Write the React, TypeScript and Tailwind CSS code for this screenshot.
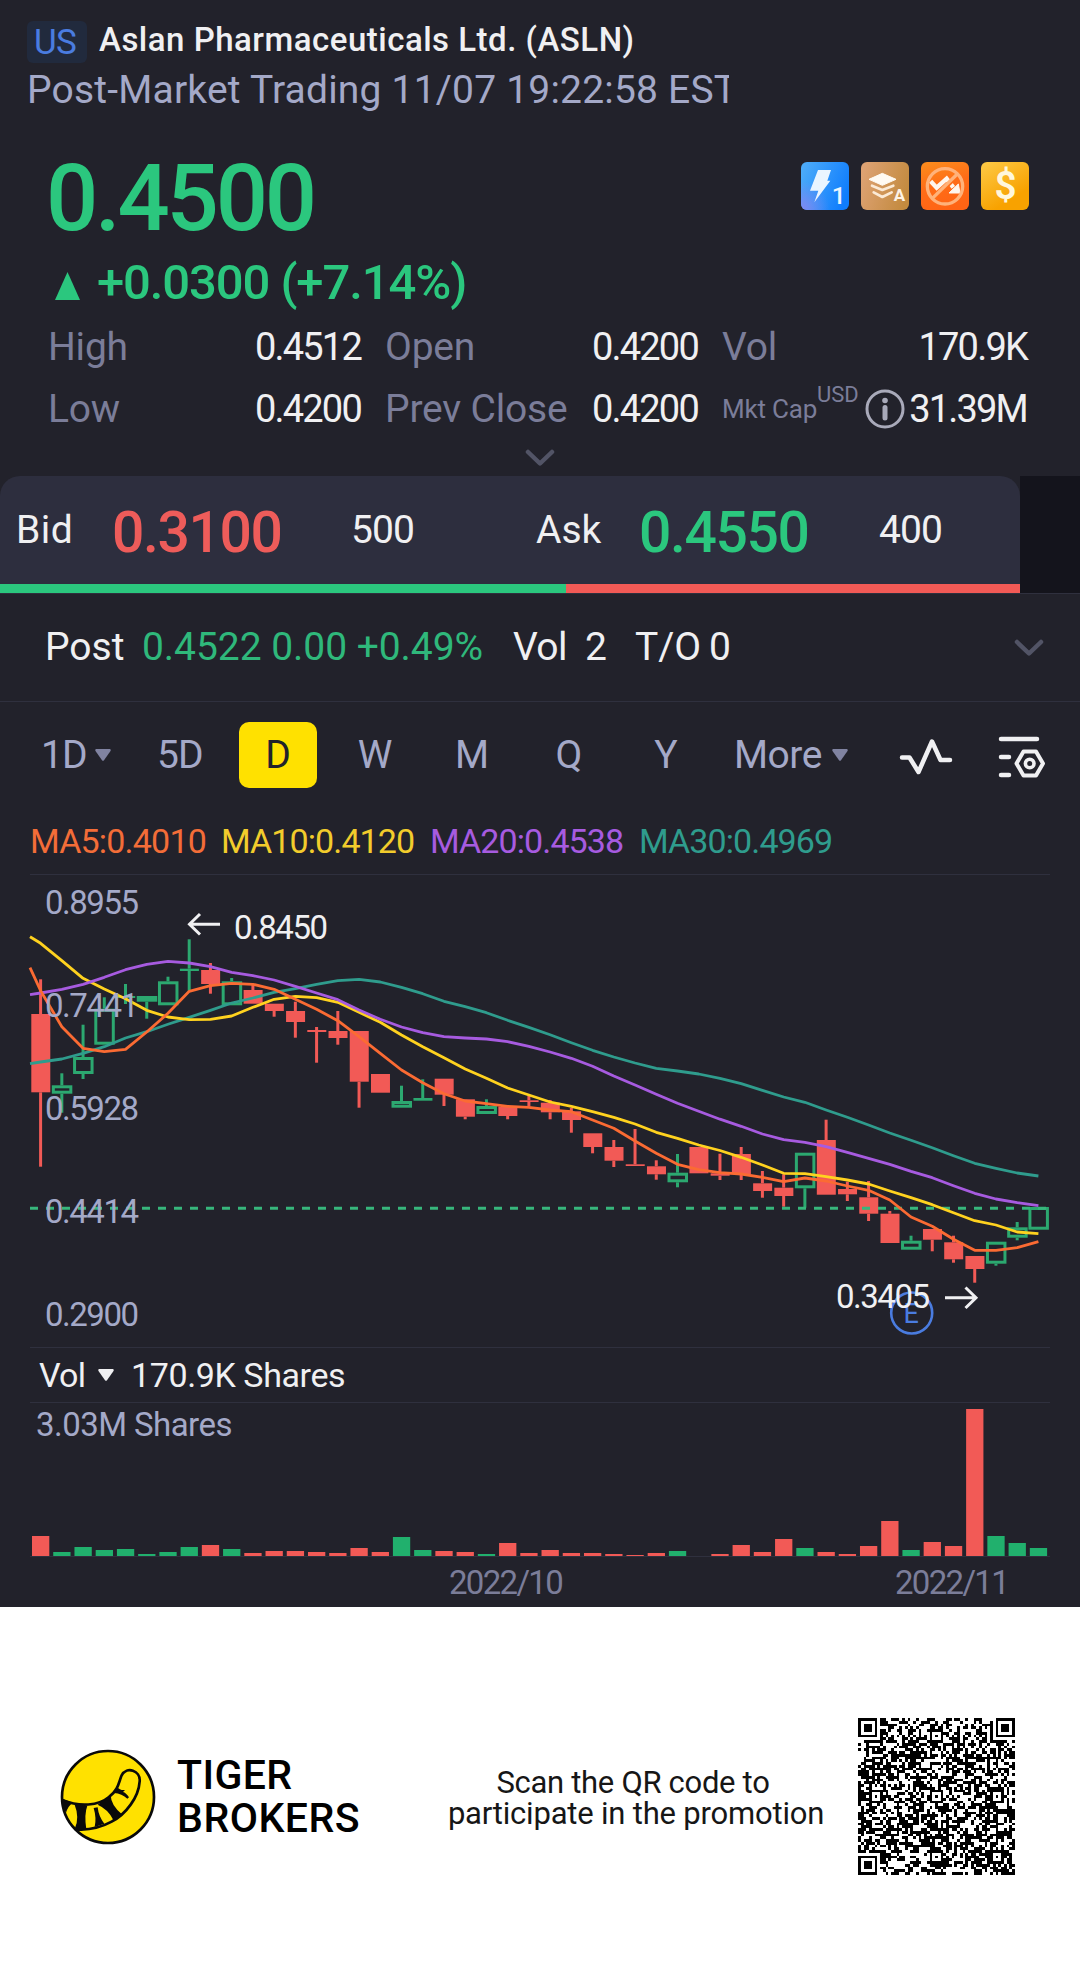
import React from 'react';
import clsx from 'clsx';

const RED = '#f25a56';
const GREEN = '#2ca870';
const CHART_FONT = 'Roboto, sans-serif';

const FIRST_X = 40.6;
const STEP = 21.23;
const CHART_TOP = 874;

interface Candle {
  up?: boolean;
  top: number;
  bottom: number;
  high?: number;
  low?: number;
  // bar height in the volume pane
  vol: number;
}

const CANDLES: Candle[] = [
  { top: 1014, bottom: 1092.3, high: 979.3, low: 1166.7, vol: 20 },
  { up: true, top: 1085.3, bottom: 1093.7, high: 1073.3, low: 1112.7, vol: 4 },
  { up: true, top: 1057, bottom: 1074, high: 1024.7, low: 1079, vol: 9 },
  { up: true, top: 1008.7, bottom: 1044.7, high: 997.3, vol: 6 },
  { up: true, top: 996, bottom: 998, high: 984, low: 1004, vol: 7 },
  { up: true, top: 996, bottom: 1001.7, low: 1018.7, vol: 2 },
  { up: true, top: 981.3, bottom: 1005.3, high: 976.7, vol: 4 },
  { up: true, top: 968.7, bottom: 971, high: 939.3, low: 990.7, vol: 9 },
  { top: 970, bottom: 984, high: 963, low: 993.7, vol: 11 },
  { up: true, top: 981.3, bottom: 1005.3, high: 978, vol: 7 },
  { top: 990, bottom: 1003.7, high: 984, vol: 3 },
  { top: 1003.7, bottom: 1011, low: 1016.7, vol: 5 },
  { top: 1011, bottom: 1022, high: 1001.7, low: 1037.7, vol: 5 },
  { top: 1030, bottom: 1032, high: 1027, low: 1062.7, vol: 4 },
  { top: 1031, bottom: 1038, high: 1011, low: 1044.7, vol: 3 },
  { top: 1031, bottom: 1081.7, low: 1107.7, vol: 8 },
  { top: 1074, bottom: 1092.7, vol: 4 },
  { up: true, top: 1101, bottom: 1107.7, high: 1085.7, vol: 19 },
  { up: true, top: 1098, bottom: 1100.7, high: 1079.3, vol: 6 },
  { top: 1078.7, bottom: 1094.7, low: 1106, vol: 5 },
  { top: 1099.3, bottom: 1116.7, low: 1119.3, vol: 4 },
  { up: true, top: 1106, bottom: 1114, high: 1099.3, vol: 2 },
  { top: 1106.7, bottom: 1116, low: 1119.3, vol: 13 },
  { top: 1100.3, bottom: 1102, high: 1096, low: 1106, vol: 3 },
  { top: 1102.7, bottom: 1112.3, high: 1100, low: 1119.3, vol: 6 },
  { top: 1111.3, bottom: 1120, high: 1108, low: 1132.7, vol: 3 },
  { top: 1133.3, bottom: 1147, low: 1153.3, vol: 3 },
  { top: 1147, bottom: 1160.7, high: 1140, low: 1167, vol: 2 },
  { top: 1164.3, bottom: 1166, high: 1129, vol: 1 },
  { top: 1166.3, bottom: 1174.3, high: 1160.3, low: 1179.7, vol: 3 },
  { up: true, top: 1172.7, bottom: 1182.3, high: 1154, low: 1187.3, vol: 5 },
  { top: 1147, bottom: 1173.3, vol: 0 },
  { top: 1173.3, bottom: 1175.7, high: 1153.7, low: 1180, vol: 2 },
  { top: 1154, bottom: 1174, high: 1147, low: 1180, vol: 11 },
  { top: 1183.3, bottom: 1191, high: 1171, low: 1197.7, vol: 4 },
  { top: 1187.7, bottom: 1196, high: 1174.3, low: 1206.7, vol: 17 },
  { up: true, top: 1152.7, bottom: 1188.3, low: 1207.7, vol: 8 },
  { top: 1140, bottom: 1194.7, high: 1119.7, vol: 4 },
  { top: 1189, bottom: 1194.3, high: 1181.7, low: 1201, vol: 2 },
  { top: 1197.3, bottom: 1213.7, high: 1181, low: 1221, vol: 10 },
  { top: 1213.7, bottom: 1243, high: 1211, vol: 35 },
  { up: true, top: 1240.7, bottom: 1249.7, high: 1235.7, vol: 6 },
  { top: 1229, bottom: 1239.7, low: 1251.3, vol: 14 },
  { top: 1242.3, bottom: 1259.3, high: 1235.7, low: 1262.7, vol: 10 },
  { top: 1256, bottom: 1269, low: 1282.7, vol: 147 },
  { up: true, top: 1241.7, bottom: 1263.7, low: 1265.7, vol: 20 },
  { up: true, top: 1227.3, bottom: 1237.7, high: 1222, low: 1240.3, vol: 13 },
  { up: true, top: 1207, bottom: 1229.7, vol: 8 },
];

// The first value of every line sits on the left edge of the pane.
const AVERAGES = [
  {
    color: '#2f9c8d',
    values: [1063.7, 1062, 1059, 1053.3, 1046.7, 1038, 1031.7, 1024.3, 1017.3, 1010.3, 1003, 998, 992.3, 988.7, 984.3, 980.7, 979.3, 982, 987.3, 993.7, 1001.3, 1006.7, 1012.7, 1020.3, 1027.3, 1034.7, 1042.7, 1050.3, 1057, 1063, 1068.3, 1071, 1074, 1078.3, 1083.7, 1090.3, 1097, 1102.3, 1110, 1117.3, 1125, 1133, 1140.3, 1147.7, 1155.7, 1163.3, 1168.3, 1173, 1176],
  },
  {
    color: '#ffd21f',
    values: [936.7, 943.3, 960.7, 978.3, 989, 998.7, 1010.3, 1017, 1019.7, 1019.3, 1016, 1007.3, 999.3, 996.3, 997.7, 1002.3, 1012.3, 1022.3, 1035, 1046.7, 1057.7, 1069, 1078.3, 1088, 1095, 1102, 1106.3, 1111.7, 1117.3, 1124, 1132.3, 1138.3, 1145, 1150.5, 1157.3, 1165, 1173.3, 1173.7, 1176.7, 1180, 1184, 1191, 1197.7, 1204.7, 1212.7, 1220.7, 1225, 1232, 1233.7],
  },
  {
    color: '#a75be0',
    values: [994.7, 993, 989.3, 984.3, 977.3, 969.7, 964.3, 961.3, 963, 966.7, 972.3, 975.7, 980, 986.3, 993, 999.7, 1010, 1019.3, 1027, 1032.7, 1036.7, 1038, 1039, 1041.7, 1046.3, 1052, 1058.3, 1066.3, 1076, 1085, 1094.3, 1103.3, 1111.3, 1119.2, 1126.3, 1134, 1139.7, 1142.3, 1146.7, 1152.3, 1158.3, 1164.3, 1171.3, 1177.7, 1185.7, 1193.3, 1199, 1202.7, 1205.7],
  },
  {
    color: '#fb6b33',
    values: [967.7, 990.7, 1026.7, 1048.3, 1051.7, 1049.3, 1032, 1013.3, 991.3, 985.7, 983.3, 984.3, 989.3, 999.3, 1009.3, 1020.7, 1036.7, 1053.3, 1070, 1082.7, 1093.7, 1101, 1103.7, 1106.3, 1107.3, 1110, 1111.7, 1120, 1128.3, 1141, 1153.3, 1164.3, 1169.7, 1172.7, 1174, 1177.3, 1181.7, 1178, 1181, 1186, 1190.3, 1200, 1217, 1226.3, 1239.3, 1250.3, 1250.3, 1247.7, 1241.7],
  },
];

const PRICE_LABELS = [
  { text: '0.8955', y: 913.5 },
  { text: '0.7441', y: 1016.5 },
  { text: '0.5928', y: 1119.5 },
  { text: '0.4414', y: 1222.5 },
  { text: '0.2900', y: 1325.5 },
];

const centerX = (index: number) => FIRST_X + STEP * index;

const CandleShape: React.FC<{ candle: Candle; index: number }> = ({ candle, index }) => {
  const x = centerX(index);
  const { up, top, bottom, high = top, low = bottom } = candle;
  const color = up ? GREEN : RED;
  const hollow = up && bottom - top > 5;

  return (
    <g stroke={color} strokeWidth={3}>
      {high < top && <line x1={x} x2={x} y1={high} y2={top} />}
      {low > bottom && <line x1={x} x2={x} y1={bottom} y2={low} />}
      {hollow ? (
        <rect x={x - 8.5} y={top + 1.5} width={17.5} height={bottom - top - 3} fill="none" />
      ) : (
        <rect x={x - 9.3} y={top} width={19} height={bottom - top} fill={color} stroke="none" />
      )}
    </g>
  );
};

const PriceChart = () => (
  <svg className="block" width="1080" height="474" viewBox={`0 ${CHART_TOP} 1080 474`}>
    <path d="M30 874.5H1050M30 1347.5H1050" stroke="#2f303e" />
    {CANDLES.map((candle, i) => (
      <CandleShape key={i} candle={candle} index={i} />
    ))}
    <line x1="30" x2="1050" y1="1208.3" y2="1208.3" stroke="#37b67c" strokeWidth={3} strokeDasharray="8 8" />
    {AVERAGES.map(({ color, values }) => (
      <polyline
        key={color}
        fill="none"
        stroke={color}
        strokeWidth={2.8}
        strokeLinejoin="round"
        points={values.map((y, i) => `${i === 0 ? 30 : centerX(i - 1)},${y}`).join(' ')}
      />
    ))}
    <g fontFamily={CHART_FONT} fontSize="33" fill="#a4a9c8" fontWeight="370">
      {PRICE_LABELS.map(({ text, y }) => (
        <text key={text} x="45" y={y} textLength="94">
          {text}
        </text>
      ))}
    </g>
    <circle cx="911.7" cy="1313" r="20.5" fill="none" stroke="#4a7ce0" strokeWidth={2.6} />
    <text x="903.5" y="1323" fontFamily={CHART_FONT} fontSize="27" fontWeight="400" fill="#4a7ce0">
      E
    </text>
    <g fontFamily={CHART_FONT} fontSize="33" fill="#f0f0f2" fontWeight="370">
      <text x="234" y="938.5" textLength="94">
        0.8450
      </text>
      <text x="836" y="1307.5" textLength="94">
        0.3405
      </text>
    </g>
    <g fill="none" stroke="#f0f0f2" strokeWidth={3}>
      <path d="M220 924.3H190M200 914 189.5 924.3 200 934.5" />
      <path d="M945 1297.7H975M965.5 1287.5 976 1297.7 965.5 1308" />
    </g>
  </svg>
);

const VolumeChart = () => (
  <div className="relative h-[155px]">
    <svg className="block" width="1080" height="155">
      <path d="M30 .5H1050M30 154.5H1050" stroke="#2f303e" />
      {CANDLES.map(({ up, vol }, i) => (
        <rect key={i} x={centerX(i) - 8.6} y={154 - vol} width="17.3" height={vol} fill={up ? '#21b06d' : RED} />
      ))}
    </svg>
    <span className="absolute top-[3px] left-[36px] text-[33px] leading-[40px] tracking-[-0.55px] text-[#a4a9c8]">
      3.03M Shares
    </span>
  </div>
);

const Caret: React.FC<{ className?: string }> = ({ className }) => (
  <svg className={className} width="16" height="12" viewBox="0 0 16 12" fill="currentColor">
    <path d="M1.5 0h13c1 0 1.6 1 1 1.9L9 11.2a1.3 1.3 0 0 1-2 0L.5 1.9C-.1 1 .5 0 1.5 0z" />
  </svg>
);

const Chevron: React.FC<{ className?: string }> = ({ className }) => (
  <svg className={className} width="30" height="18" viewBox="0 0 30 18" fill="none" stroke="#525466" strokeWidth={4.5} strokeLinecap="round" strokeLinejoin="round">
    <path d="M3 3 15 14.5 27 3" />
  </svg>
);

const Badges = () => (
  <div className="flex gap-3">
    <svg width="48" height="48" viewBox="0 0 144 144">
      <defs>
        <linearGradient id="blue" x1="0" y1="0.2" x2="1" y2="0.6">
          <stop offset="0" stopColor="#4cabf9" />
          <stop offset="1" stopColor="#0f7dfd" />
        </linearGradient>
        <radialGradient id="violet" cx="0" cy="1" r="0.6">
          <stop offset="0" stopColor="#8388f0" />
          <stop offset="1" stopColor="#8388f0" stopOpacity="0" />
        </radialGradient>
        <linearGradient id="bronze" x1="0" y1="0.3" x2="1" y2="0.6">
          <stop offset="0" stopColor="#dda273" />
          <stop offset="1" stopColor="#c38a3e" />
        </linearGradient>
        <linearGradient id="orange" x1="0.2" y1="0" x2="0.5" y2="1">
          <stop offset="0" stopColor="#fb8b1d" />
          <stop offset="0.5" stopColor="#ff6c17" />
          <stop offset="1" stopColor="#ff6414" />
        </linearGradient>
        <linearGradient id="gold" x1="0.1" y1="0" x2="0.6" y2="0.8">
          <stop offset="0" stopColor="#fdc844" />
          <stop offset="1" stopColor="#f8a200" />
        </linearGradient>
      </defs>
      <rect width="144" height="144" rx="18" fill="url(#blue)" />
      <rect width="144" height="144" rx="18" fill="url(#violet)" />
      <path d="M51 24H90L79 56H88L40 121 52 86H27z" fill="#eaf5ff" />
      <text x="92" y="125" fontFamily={CHART_FONT} fontSize="74" fontWeight="500" fill="#eaf5ff">
        1
      </text>
    </svg>
    <svg width="48" height="48" viewBox="0 0 144 144">
      <rect width="144" height="144" rx="18" fill="url(#bronze)" />
      <path d="M64 34 105 52 64 70 24 52z" fill="#fffaf2" stroke="#fffaf2" strokeWidth="3" strokeLinejoin="round" />
      <path d="M33 71 64 84 97 71M38 91 64 105 92 91" fill="none" stroke="#fbead6" strokeWidth="8" strokeLinecap="round" strokeLinejoin="round" />
      <text x="98" y="117" fontFamily={CHART_FONT} fontSize="51" fontWeight="700" fill="#fdf3e6">
        A
      </text>
    </svg>
    <svg width="48" height="48" viewBox="0 0 144 144">
      <rect width="144" height="144" rx="18" fill="url(#orange)" />
      <path d="M29 58 47 77 77 50 97 76" fill="none" stroke="#fff6ee" strokeWidth="13" />
      <path d="M112 66 117 93H84z" fill="#fff6ee" stroke="#fff6ee" strokeWidth="3" strokeLinejoin="round" />
      <path d="M40 110 112 42" stroke="#ff6c17" strokeWidth="8" />
      <path d="M34 109 109 36" stroke="#ffb27a" strokeWidth="10" />
      <circle cx="72" cy="73" r="53" fill="none" stroke="#ffb27a" strokeWidth="10" />
    </svg>
    <svg width="48" height="48" viewBox="0 0 144 144">
      <rect width="144" height="144" rx="18" fill="url(#gold)" />
      <text x="74" y="112" textAnchor="middle" fontFamily={CHART_FONT} fontSize="116" fontWeight="600" fill="#fff7dc">
        $
      </text>
    </svg>
  </div>
);

const StatLabel: React.FC<{ children: React.ReactNode }> = ({ children }) => (
  <span className="text-[39px] tracking-[-0.2px] text-[#7b7d99]">{children}</span>
);

const StatValue: React.FC<{ children: React.ReactNode; className?: string }> = ({ children, className }) => (
  <span className={clsx('text-[38px] tracking-[-1.8px] text-[#f0f0f2]', className)}>{children}</span>
);

const Stats = () => (
  <div className="grid grid-cols-[313px_313px_305px] gap-x-6 pt-px pl-12 leading-[62px]">
    <div className="flex justify-between">
      <StatLabel>High</StatLabel>
      <StatValue>0.4512</StatValue>
    </div>
    <div className="flex justify-between">
      <StatLabel>Open</StatLabel>
      <StatValue>0.4200</StatValue>
    </div>
    <div className="flex justify-between">
      <StatLabel>Vol</StatLabel>
      <StatValue>170.9K</StatValue>
    </div>
    <div className="flex justify-between">
      <StatLabel>Low</StatLabel>
      <StatValue>0.4200</StatValue>
    </div>
    <div className="flex justify-between">
      <StatLabel>Prev Close</StatLabel>
      <StatValue>0.4200</StatValue>
    </div>
    <div className="flex h-[62px] items-center text-[#7b7d99]">
      <span className="w-[95px] text-[26px] tracking-[-0.2px] whitespace-nowrap">Mkt Cap</span>
      <span className="mb-[29px] w-[48px] text-[22px]">USD</span>
      <svg width="40" height="40" viewBox="0 0 40 40" fill="none" stroke="#a9aaba" strokeWidth={3}>
        <circle cx="20" cy="20" r="18" />
        <path d="M20 18.500V29" strokeWidth={5} strokeLinecap="round" />
        <circle cx="20" cy="11.500" r="2.800" fill="#a9aaba" stroke="none" />
      </svg>
      <StatValue className="ml-auto">31.39M</StatValue>
    </div>
  </div>
);

const Header = () => (
  <header className="flex h-[476px] flex-col">
    <div className="mt-[21px] flex h-[42px] items-center pl-[27px]">
      <span className="flex h-[42px] w-[60px] items-center justify-center rounded-md bg-[#212a3d] pt-[3px] pr-1 text-[35px] tracking-[-0.7px] text-[#4a7ce0]">
        US
      </span>
      <span className="ml-3 pb-[5px] text-[33px] font-medium tracking-[0.5px] text-[#f0f0f2]">
        Aslan Pharmaceuticals Ltd. (ASLN)
      </span>
    </div>
    <div className="ml-[27px] h-[53px] w-[702px] overflow-hidden text-[39px] leading-[55px] tracking-[0.2px] whitespace-nowrap text-[#a4a9c8]">
      Post-Market Trading 11/07 19:22:58 EST
    </div>
    <div className="mt-9 flex h-[92px] justify-between pr-[51px] pl-[46px]">
      <span className="text-[92px] leading-[94px] font-medium tracking-[-3.200px] text-[#2bc77e]">0.4500</span>
      <div className="pt-2.5">
        <Badges />
      </div>
    </div>
    <div className="mt-[7px] flex h-[64px] items-center pl-[55px] text-[49px] tracking-[-1.1px] text-[#2bc77e]">
      <svg className="mt-1.5 mr-[17px]" width="25" height="28" viewBox="0 0 25 28" fill="currentColor">
        <path d="M12.500 0 25 28H0z" />
      </svg>
      <span className="font-medium">+0.0300 (+7.14%)</span>
    </div>
    <Stats />
    <Chevron className="mt-[9px] self-center" />
  </header>
);

const BidAsk = () => (
  <div className="h-[117px] bg-[#14141c]">
    <div className="flex h-full w-[1020px] flex-col overflow-hidden bg-[#22222b]">
      <div className="flex h-[108px] items-center rounded-t-[20px] bg-[#2d2e3e] pl-4 text-[39px] text-[#f0f0f2]">
        <span className="w-[96px] tracking-[0.5px]">Bid</span>
        <span className="w-[239px] pt-1.5 text-[57px] font-medium tracking-[-1.4px] text-[#ee5c5a]">0.3100</span>
        <span className="w-[185px] tracking-[-0.9px]">500</span>
        <span className="w-[103px]">Ask</span>
        <span className="w-[240px] pt-1.5 text-[57px] font-medium tracking-[-1.4px] text-[#2bc77e]">0.4550</span>
        <span className="tracking-[-0.9px]">400</span>
      </div>
      <div className="flex h-[9px]">
        <div className="w-[566px] bg-[#2bc77e]" />
        <div className="flex-1 bg-[#f25a56]" />
      </div>
    </div>
  </div>
);

const PostRow = () => (
  <div className="flex h-[109px] items-center border-y border-[#2f303e] pl-[45px] text-[39px] whitespace-pre text-[#f0f0f2]">
    <span className="w-[97px]">Post</span>
    <span className="w-[371px] tracking-[-0.05px] text-[#2fb87b]">0.4522 0.00 +0.49%</span>
    <span className="w-[72px] tracking-[-0.6px]">Vol</span>
    <span className="w-[50px]">2</span>
    <span className="w-[74px]">T/O</span>
    <span className="tracking-[-1px]">0</span>
    <Chevron className="mr-9 ml-auto" />
  </div>
);

const PulseIcon = () => (
  <svg width="54" height="36" viewBox="0 0 54 36" fill="none" stroke="#f0f0f2" strokeWidth={4.5} strokeLinecap="round" strokeLinejoin="round">
    <path d="M3 18.500H10.500L19.500 33 33 2.500 41.500 21H51" />
  </svg>
);

const SettingsIcon = () => (
  <svg width="48" height="44" viewBox="0 0 48 44" fill="none" stroke="#f0f0f2" strokeWidth={4.5} strokeLinecap="round" strokeLinejoin="round">
    <path d="M3 4H39M3 22H11M3 40H11" />
    <path d="M25.500 16.500H38L45 28.500 38 40.500H25.500L18.500 28.500z" strokeWidth={4} />
    <circle cx="31.700" cy="28.500" r="4.300" strokeWidth={3.6} />
  </svg>
);

const Tabs = () => (
  <nav className="flex h-[106px] items-center pl-[41px] text-[39px] text-[#a4a9c8]">
    <span className="flex w-[116px] items-center tracking-[-1px]">
      1D
      <Caret className="ml-2 text-[#8083a1]" />
    </span>
    <span className="w-[82px] tracking-[-1px]">5D</span>
    <span className="flex h-[66px] w-[78px] items-center justify-center rounded-[10px] bg-[#ffe100] text-[#22222b]">D</span>
    <span className="w-[116px] text-center">W</span>
    <span className="w-[78px] text-center">M</span>
    <span className="w-[116px] text-center">Q</span>
    <span className="w-[78px] text-center">Y</span>
    <span className="ml-[29px] flex w-[165px] items-center tracking-[-0.5px]">
      More
      <Caret className="ml-2.5 text-[#8083a1]" />
    </span>
    <span className="mt-1 w-[99px]">
      <PulseIcon />
    </span>
    <span className="mt-1">
      <SettingsIcon />
    </span>
  </nav>
);

const Legend = () => (
  <div className="flex h-[66px] items-center pl-[30px] text-[34px]">
    <span className="w-[191px] tracking-[-0.8px] text-[#f36d38]">MA5:0.4010</span>
    <span className="w-[209px] tracking-[-0.9px] text-[#f2cc2c]">MA10:0.4120</span>
    <span className="w-[209px] tracking-[-0.9px] text-[#a75be0]">MA20:0.4538</span>
    <span className="tracking-[-0.9px] text-[#2f9c8d]">MA30:0.4969</span>
  </div>
);

const QR_SIZE = 57;

const ringAt = (dx: number, dy: number) => Math.max(Math.abs(dx), Math.abs(dy));

const buildQr = () => {
  const last = QR_SIZE - 4;
  const finders = [[3, 3], [last, 3], [3, last]];
  const marks = [6, 28, 50];
  let seed = 20221107;
  let d = '';
  for (let y = 0; y < QR_SIZE; y++) {
    for (let x = 0; x < QR_SIZE; x++) {
      seed = (seed * 1103515245 + 12345) % 2147483648;
      let dark = seed / 2147483648 > 0.46;
      if (y === 6 || x === 6) dark = (x + y) % 2 === 0;
      for (const my of marks) {
        for (const mx of marks) {
          const r = ringAt(x - mx, y - my);
          if (r <= 2) dark = r !== 1;
        }
      }
      for (const [fx, fy] of finders) {
        const r = ringAt(x - fx, y - fy);
        if (r <= 4) dark = r !== 2 && r !== 4;
      }
      if (dark) d += `M${x} ${y}h1v1h-1z`;
    }
  }
  return d;
};

const QR_PATH = buildQr();

const TigerLogo = () => (
  <svg width="96" height="96" viewBox="60 55 288 288">
    <circle cx="204" cy="199" r="138" fill="#ffe100" stroke="#0a0a0a" strokeWidth="8" />
    <path
      d="M67 209C120 229 175 226 208 198 236 176 236 155 245 134 260 105 302 120 299 152 296 200 258 250 215 273 180 292 145 299 108 296"
      fill="none"
      stroke="#0a0a0a"
      strokeWidth="8"
      strokeLinecap="round"
    />
    <g fill="#0a0a0a">
      <path d="M64 203 98 216Q84 226 78 246L66 224z" />
      <path d="M103 219 142 225Q132 250 139 297L104 295Q120 262 103 219z" />
      <path d="M161 232 173 230Q176 258 193 279L164 289Q170 262 161 232z" />
      <path d="M173 222 212 194Q213 224 245 250L220 268Q205 236 173 222z" />
      <path d="M231 168Q240 180 255 178L249 184Q258 186 267 200L262 204Q246 189 222 187z" />
    </g>
  </svg>
);

const PromoFooter = () => (
  <footer className="flex h-[380px] items-center bg-white pl-[60px] text-black">
    <TigerLogo />
    <div className="ml-[21px] w-[270px] text-[41px] leading-[43px] font-medium">
      <div className="tracking-[0.4px]">TIGER</div>
      <div className="tracking-[0.5px]">BROKERS</div>
    </div>
    <div className="mt-px w-[378px] text-center text-[31px] leading-[31px] tracking-[-0.2px] whitespace-nowrap text-[#161616]">
      <div className="pr-1.5 tracking-[-0.3px]">Scan the QR code to</div>
      <div>participate in the promotion</div>
    </div>
    <svg className="mb-px ml-[33px]" width="157" height="157" viewBox="0 0 57 57" shapeRendering="crispEdges">
      <path d={QR_PATH} />
    </svg>
  </footer>
);

const App: React.FC = () => (
  <div className="h-[1987px] w-[1080px] overflow-hidden bg-[#22222b] font-['Roboto',sans-serif] font-[370]">
    <Header />
    <BidAsk />
    <PostRow />
    <Tabs />
    <Legend />
    <PriceChart />
    <div className="flex h-[54px] items-center pl-[39px] text-[34px] text-[#f0f0f2]">
      <span className="w-[59px] tracking-[-0.8px]">Vol</span>
      <Caret />
      <span className="ml-[17px] tracking-[-0.4px]">170.9K Shares</span>
    </div>
    <VolumeChart />
    <div className="flex h-[50px] items-center pt-px pl-[449px] text-[33px] tracking-[-1.7px] text-[#7b7d99]">
      <span className="w-[446px]">2022/10</span>
      <span>2022/11</span>
    </div>
    <PromoFooter />
  </div>
);

export default App;
